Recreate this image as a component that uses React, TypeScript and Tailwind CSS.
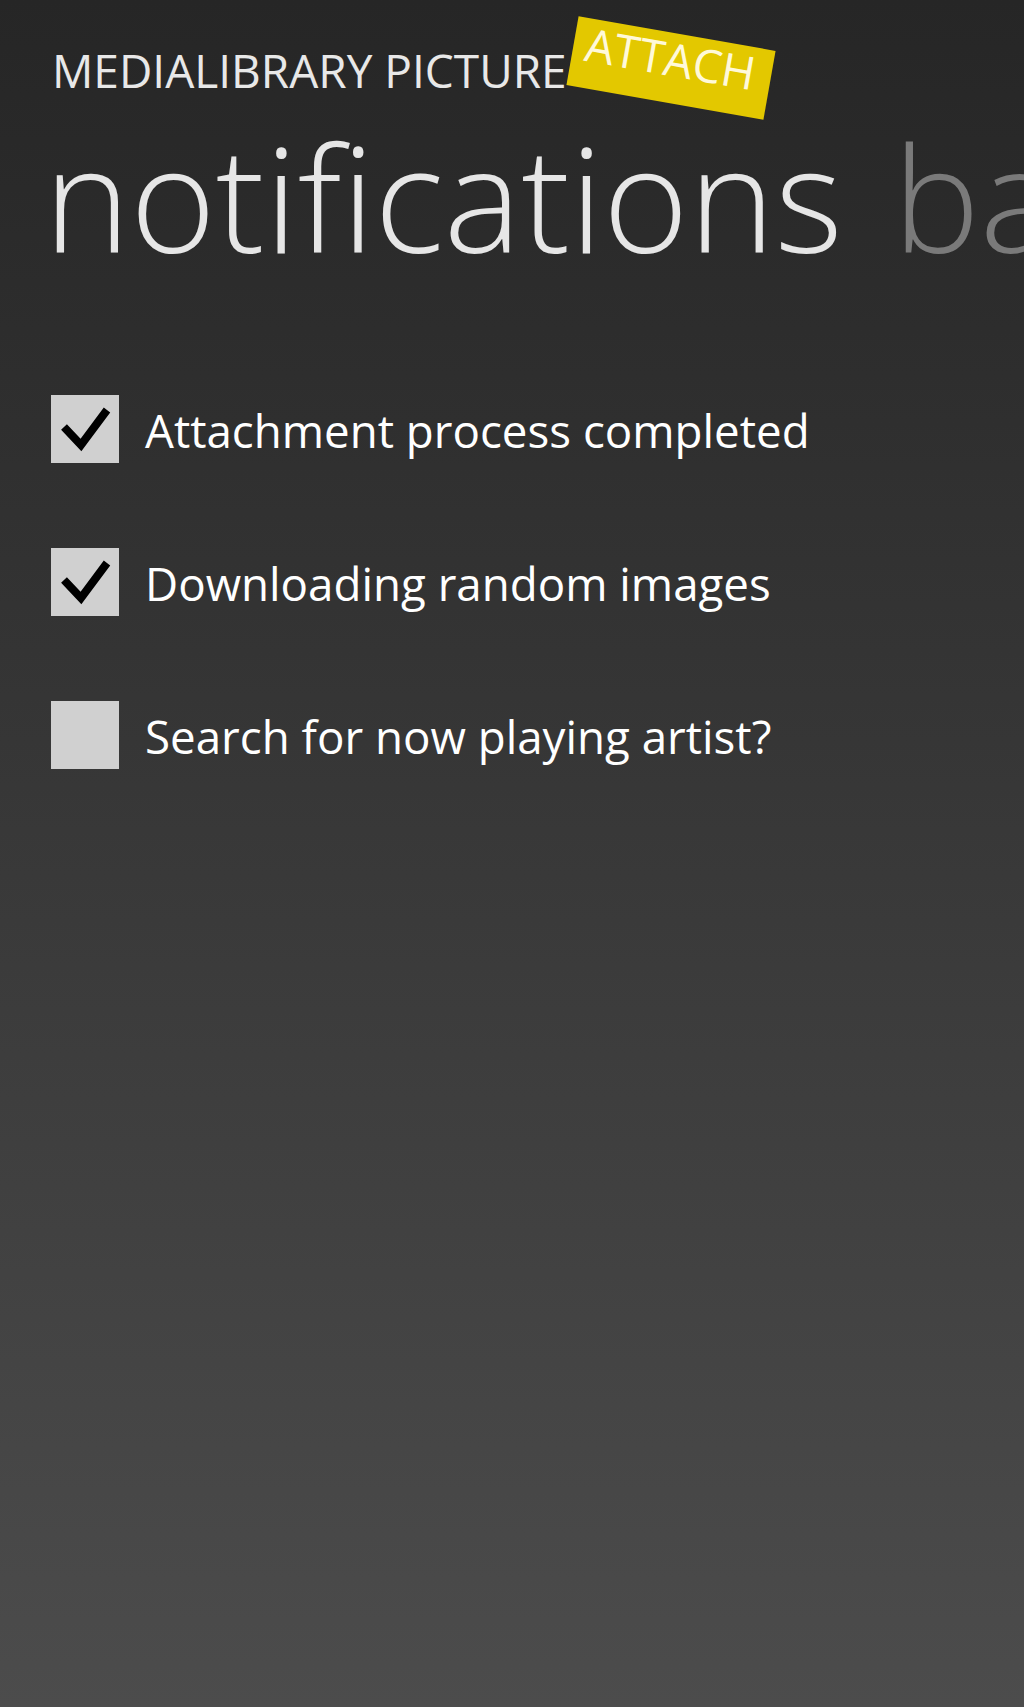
const items = [
  { label: 'Attachment process completed', checked: true },
  { label: 'Downloading random images', checked: true },
  { label: 'Search for now playing artist?', checked: false },
]

function CheckBox({ checked }: { checked: boolean }) {
  return (
    <div className="w-[68px] h-[68px] shrink-0 bg-[#d0d0d0] flex items-center justify-center">
      {checked && (
        <svg width="68" height="68" viewBox="0 0 68 68">
          <path d="M13 32 L30 50 L56 15" fill="none" stroke="#000" strokeWidth="8" strokeLinejoin="miter" />
        </svg>
      )}
    </div>
  )
}

export default function App() {
  return (
    <div
      className="w-[1024px] h-[1707px] overflow-hidden bg-gradient-to-b from-[#262626] to-[#4c4c4c] text-white"
      style={{ fontFamily: '"Open Sans", "Noto Sans", sans-serif' }}
    >
      {/* App title + badge */}
      <div className="relative pl-[52px] pt-[47px]">
        <div className="text-[46px] leading-none text-[#e8e8e8]">MEDIALIBRARY PICTURE</div>
        <div className="absolute left-[571px] top-[33px] w-[200px] h-[70px] bg-[#e3c800] rotate-[10deg] pl-[12px] pt-[2px] overflow-hidden">
          <span className="block text-[46px] leading-none text-[#fff9d9]">ATTACH</span>
        </div>
      </div>

      {/* Pivot headers */}
      <div className="flex items-baseline gap-[50px] pl-[44px] mt-[31px] whitespace-nowrap text-[146px] leading-none font-[350]">
        <span className="text-[#e6e6e6]">notifications</span>
        <span className="text-[#7a7a7a]">background</span>
      </div>

      {/* Options */}
      <div className="flex flex-col gap-[85px] pl-[51px] mt-[125px]">
        {items.map((it) => (
          <div key={it.label} className="flex items-center gap-[26px]">
            <CheckBox checked={it.checked} />
            <span className="text-[45.7px] leading-none text-white pt-[3px]">{it.label}</span>
          </div>
        ))}
      </div>
    </div>
  )
}
